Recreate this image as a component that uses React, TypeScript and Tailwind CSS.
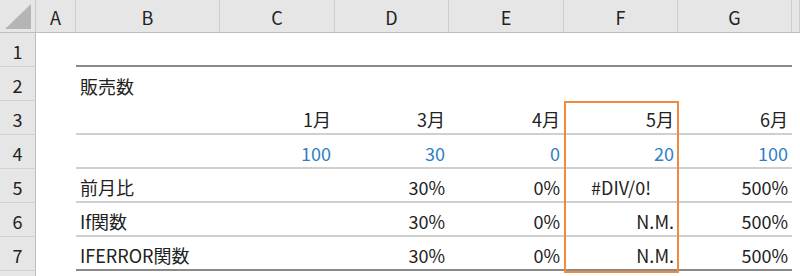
import React from "react";

const widths = [
  "w-[40px]",
  "w-[144px]",
  "w-[115px]",
  "w-[114px]",
  "w-[115px]",
  "w-[114px]",
  "w-[114px]",
  "flex-1",
];

type Cell = { t?: string; align?: "l" | "r" | "c"; blue?: boolean };
type Row = { cells: Cell[]; border: "dark" | "light" | "none" };

const rows: Row[] = [
  { cells: [], border: "dark" },
  { cells: [{}, { t: "販売数", align: "l" }], border: "none" },
  {
    cells: [{}, {}, { t: "1月", align: "r" }, { t: "3月", align: "r" }, { t: "4月", align: "r" }, { t: "5月", align: "r" }, { t: "6月", align: "r" }],
    border: "light",
  },
  {
    cells: [
      {},
      {},
      { t: "100", align: "r", blue: true },
      { t: "30", align: "r", blue: true },
      { t: "0", align: "r", blue: true },
      { t: "20", align: "r", blue: true },
      { t: "100", align: "r", blue: true },
    ],
    border: "light",
  },
  {
    cells: [{}, { t: "前月比", align: "l" }, {}, { t: "30%", align: "r" }, { t: "0%", align: "r" }, { t: "#DIV/0!", align: "c" }, { t: "500%", align: "r" }],
    border: "light",
  },
  {
    cells: [{}, { t: "If関数", align: "l" }, {}, { t: "30%", align: "r" }, { t: "0%", align: "r" }, { t: "N.M.", align: "r" }, { t: "500%", align: "r" }],
    border: "light",
  },
  {
    cells: [{}, { t: "IFERROR関数", align: "l" }, {}, { t: "30%", align: "r" }, { t: "0%", align: "r" }, { t: "N.M.", align: "r" }, { t: "500%", align: "r" }],
    border: "dark",
  },
];

const font = { fontFamily: '"Noto Sans CJK JP", "Noto Sans", sans-serif' };

export default function App() {
  const letters = ["A", "B", "C", "D", "E", "F", "G", ""];
  return (
    <div className="relative w-[800px] h-[276px] overflow-hidden bg-white text-[18px] text-[#222]" style={font}>
      {/* column header */}
      <div className="flex h-[33px] bg-[#e6e6e6] border-b border-[#bdbdbd]">
        <div className="w-[36px] shrink-0 border-r border-[#c8c8c8] flex items-end justify-end pr-[2px] pb-[2px]">
          <svg width="28" height="26" viewBox="0 0 28 26">
            <polygon points="26,0 26,25 0,25" fill="#b5b5b5" />
          </svg>
        </div>
        {letters.map((l, i) => (
          <div
            key={i}
            className={`${widths[i]} shrink-0 flex items-center justify-center border-r border-[#cfcfcf] leading-none pt-[2px]`}
          >
            {l}
          </div>
        ))}
      </div>
      {rows.map((r, ri) => (
        <div key={ri} className="flex h-[34px]">
          <div className="w-[36px] shrink-0 bg-[#e6e6e6] border-r border-b border-r-[#bdbdbd] border-b-[#d2d2d2] flex items-center justify-center leading-none pt-[2px]">
            {ri + 1}
          </div>
          {widths.map((w, ci) => {
            const c = r.cells[ci] || {};
            const inTable = ci >= 1 && ci <= 6;
            const b =
              inTable && r.border === "dark"
                ? "border-b-2 border-[#8a8a8a]"
                : inTable && r.border === "light"
                ? "border-b-2 border-[#cfcfcf]"
                : "";
            const al = c.align === "r" ? "justify-end pr-[4px]" : c.align === "c" ? "justify-center" : "justify-start pl-[4px]";
            return (
              <div
                key={ci}
                className={`${w} shrink-0 flex items-center ${al} ${b} leading-none whitespace-nowrap pt-[3px] ${c.blue ? "text-[#2e7fc6]" : ""}`}
              >
                {c.t}
              </div>
            );
          })}
        </div>
      ))}
      <div className="flex h-[34px]">
        <div className="w-[36px] shrink-0 bg-[#e6e6e6] border-r border-[#bdbdbd]" />
      </div>
      <div className="absolute left-[564px] top-[101px] w-[115px] h-[172px] border-2 border-[#f08a3c] pointer-events-none" />
    </div>
  );
}
